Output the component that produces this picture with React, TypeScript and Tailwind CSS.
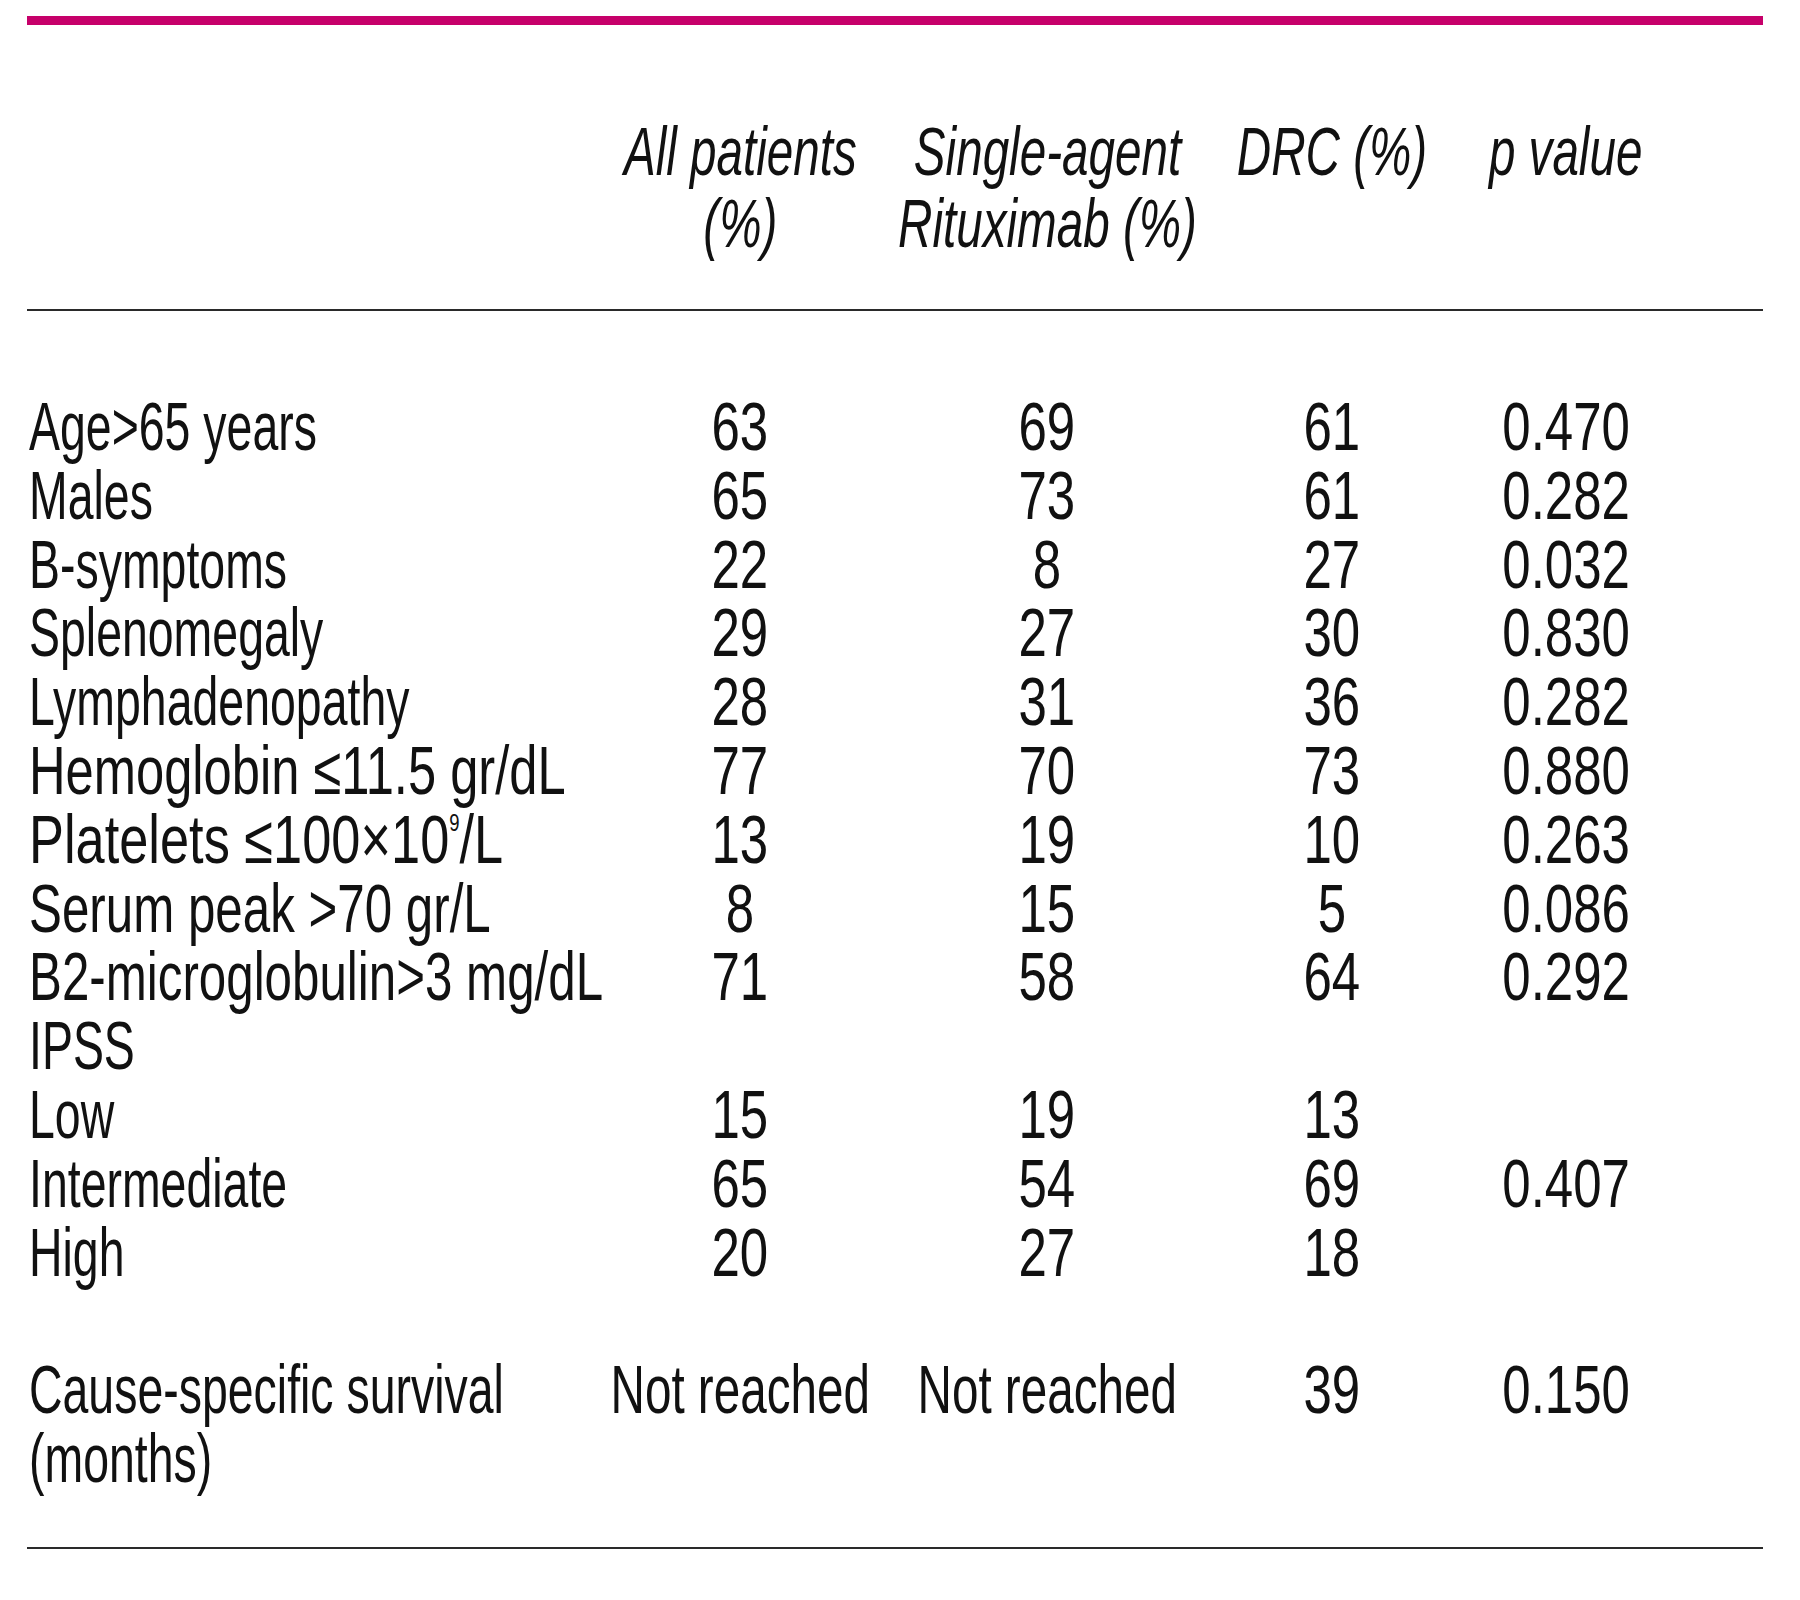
const font = "font-['Liberation_Sans_Narrow','Arial_Narrow','Liberation_Sans',sans-serif]";

// the original face is a tall condensed grotesque: squeeze the sans horizontally
const squeezeText = "[transform:scaleX(0.683)]";
const squeezeHead = "[transform:scaleX(0.70)]";
const squeezeNum = "[transform:scaleX(0.75)]";

type Row = { label: React.ReactNode; squeeze?: string; all?: string; single?: string; drc?: string; p?: string };

const rows: Row[] = [
  { label: "Age>65 years", all: "63", single: "69", drc: "61", p: "0.470" },
  { label: "Males", all: "65", single: "73", drc: "61", p: "0.282" },
  { label: "B-symptoms", all: "22", single: "8", drc: "27", p: "0.032" },
  { label: "Splenomegaly", all: "29", single: "27", drc: "30", p: "0.830" },
  { label: "Lymphadenopathy", all: "28", single: "31", drc: "36", p: "0.282" },
  {
    label: "Hemoglobin ≤11.5 gr/dL",
    squeeze: "[transform:scaleX(0.745)]",
    all: "77",
    single: "70",
    drc: "73",
    p: "0.880",
  },
  {
    label: (
      <>
        Platelets ≤100×10
        <sup className="relative -top-[32px] align-baseline text-[24px]">9</sup>/L
      </>
    ),
    squeeze: "[transform:scaleX(0.77)]",
    all: "13",
    single: "19",
    drc: "10",
    p: "0.263",
  },
  { label: "Serum peak >70 gr/L", squeeze: "[transform:scaleX(0.725)]", all: "8", single: "15", drc: "5", p: "0.086" },
  {
    label: "B2-microglobulin>3 mg/dL",
    squeeze: "[transform:scaleX(0.725)]",
    all: "71",
    single: "58",
    drc: "64",
    p: "0.292",
  },
  { label: "IPSS" },
  { label: "Low", all: "15", single: "19", drc: "13" },
  { label: "Intermediate", all: "65", single: "54", drc: "69", p: "0.407" },
  { label: "High", all: "20", single: "27", drc: "18" },
];

const cols = "grid grid-cols-[583px_260px_354px_216px_252px]";

function Label({ children, squeeze = squeezeText }: { children: React.ReactNode; squeeze?: string }) {
  return (
    <div className="pl-[2px] whitespace-nowrap">
      <span className={`inline-block origin-left ${squeeze}`}>{children}</span>
    </div>
  );
}

function Cell({ children, squeeze = squeezeNum }: { children?: React.ReactNode; squeeze?: string }) {
  return (
    <div className="flex justify-center whitespace-nowrap text-center">
      <span className={`inline-block origin-center ${squeeze}`}>{children}</span>
    </div>
  );
}

export default function App() {
  return (
    <div className={`w-[1800px] h-[1600px] bg-white text-[#111] ${font}`}>
      <div className="ml-[27px] w-[1736px] pt-[16px]">
        <div className="h-[9px] bg-[#c6006a]" />

        {/* header */}
        <div className={`${cols} mt-[90px] text-[68px] leading-[72px] italic`}>
          <div />
          <Cell squeeze={squeezeHead}>
            All patients
            <br />
            (%)
          </Cell>
          <Cell squeeze={squeezeHead}>
            Single-agent
            <br />
            Rituximab (%)
          </Cell>
          <Cell squeeze={squeezeHead}>DRC (%)</Cell>
          <Cell squeeze={squeezeHead}>p value</Cell>
        </div>
        <div className="mt-[50px] h-[2px] bg-[#2a2a2a]" />

        {/* body */}
        <div className="mt-[81px] text-[68px] leading-[68.8px]">
          {rows.map((r, i) => (
            <div key={i} className={cols}>
              <Label squeeze={r.squeeze}>{r.label}</Label>
              <Cell>{r.all}</Cell>
              <Cell>{r.single}</Cell>
              <Cell>{r.drc}</Cell>
              <Cell>{r.p}</Cell>
            </div>
          ))}
          <div className="h-[68.8px]" />
          <div className={cols}>
            <Label>
              Cause-specific survival
              <br />
              (months)
            </Label>
            <Cell squeeze={squeezeHead}>Not reached</Cell>
            <Cell squeeze={squeezeHead}>Not reached</Cell>
            <Cell>39</Cell>
            <Cell>0.150</Cell>
          </div>
        </div>
        <div className="mt-[54px] h-[2px] bg-[#2a2a2a]" />
      </div>
    </div>
  );
}
